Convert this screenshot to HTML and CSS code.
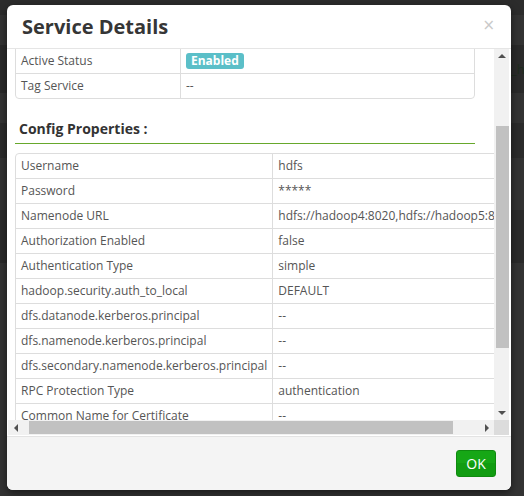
FILE: index.html
```html
<!DOCTYPE html>
<html lang="en">
<head>
<meta charset="utf-8">
<title>Service Details</title>
<link rel="stylesheet" href="styles.css">
</head>
<body>
<div class="page">
  <div class="band b-a"></div>
  <div class="band b-b"></div>
  <div class="band b-c"><span class="ghost">_h</span></div>
  <div class="band b-b"></div>
  <div class="band b-d"></div>
  <div class="band b-e"></div>
  <div class="band b-f"></div>
  <div class="band b-g"></div>
</div>

<div class="modal">
  <div class="modal-header">
    <h3 class="modal-title">Service Details</h3>
    <span class="close">×</span>
  </div>

  <div class="modal-body">
    <div class="viewport">
      <div class="content">
        <h4 class="section-title">Service Details :</h4>
        <table class="tbl tbl-service">
          <tr><td class="k">Service Name</td><td>hadoopdev</td></tr>
          <tr><td class="k">Display Name</td><td>hadoopdev</td></tr>
          <tr><td class="k">Description</td><td>--</td></tr>
          <tr><td class="k">Active Status</td><td><span class="badge">Enabled</span></td></tr>
          <tr><td class="k">Tag Service</td><td>--</td></tr>
        </table>

        <h4 class="section-title">Config Properties :</h4>
        <table class="tbl tbl-config">
          <tr><td class="k">Username</td><td>hdfs</td></tr>
          <tr><td class="k">Password</td><td>*****</td></tr>
          <tr><td class="k">Namenode URL</td><td>hdfs://hadoop4:8020,hdfs://hadoop5:8020</td></tr>
          <tr><td class="k">Authorization Enabled</td><td>false</td></tr>
          <tr><td class="k">Authentication Type</td><td>simple</td></tr>
          <tr><td class="k">hadoop.security.auth_to_local</td><td>DEFAULT</td></tr>
          <tr><td class="k">dfs.datanode.kerberos.principal</td><td>--</td></tr>
          <tr><td class="k">dfs.namenode.kerberos.principal</td><td>--</td></tr>
          <tr><td class="k">dfs.secondary.namenode.kerberos.principal</td><td>--</td></tr>
          <tr><td class="k">RPC Protection Type</td><td>authentication</td></tr>
          <tr><td class="k">Common Name for Certificate</td><td>--</td></tr>
          <tr><td class="k">policy.download.auth.users</td><td>hdfs</td></tr>
        </table>
      </div>
    </div>

    <div class="vscroll">
      <div class="sb-btn"><span class="arrow up"></span></div>
      <div class="sb-track v-track"><div class="thumb v-thumb"></div></div>
      <div class="sb-btn"><span class="arrow down"></span></div>
    </div>
    <div class="hscroll">
      <div class="sb-btn"><span class="arrow left"></span></div>
      <div class="sb-track h-track"><div class="thumb h-thumb"></div></div>
      <div class="sb-btn"><span class="arrow right"></span></div>
    </div>
    <div class="corner"></div>
  </div>

  <div class="modal-footer">
    <button class="btn-ok" type="button">OK</button>
  </div>
</div>
</body>
</html>
```

FILE: styles.css
```css
* { box-sizing: border-box; }

html, body {
  margin: 0;
  padding: 0;
  width: 524px;
  height: 496px;
  overflow: hidden;
  background: #303030;
  font-family: "Open Sans", "Liberation Sans", Arial, sans-serif;
}

/* dimmed page behind the dialog */
.page {
  display: flex;
  flex-direction: column;
  height: 496px;
}
.band { flex: none; display: flex; justify-content: flex-end; }
.b-a { height: 15px; background: #2c2c2c; }
.b-b { height: 30px; background: #333333; }
.b-c { height: 48px; background: #2a2a2a; align-items: center; }
.b-d { height: 35px; background: #2b2b2b; }
.b-e { height: 52px; background: #323232; }
.b-f { height: 53px; background: #2a2a2a; }
.b-g { flex: 1; background: #333333; }
.ghost {
  font-size: 13px;
  color: #1d2a1d;
  width: 13px;
  overflow: hidden;
  white-space: nowrap;
}

/* dialog */
.modal {
  position: absolute;
  left: 7px;
  top: 5px;
  width: 504px;
  height: 485px;
  background: #fff;
  border-radius: 6px;
  overflow: hidden;
  display: flex;
  flex-direction: column;
  box-shadow: 0 3px 9px rgba(0, 0, 0, 0.5);
}

.modal-header {
  flex: none;
  height: 44px;
  border-bottom: 1px solid #e5e5e5;
  display: flex;
  align-items: center;
  justify-content: space-between;
  padding: 0 15px 0 15px;
}
.modal-title {
  margin: 0;
  font-size: 20px;
  font-weight: 700;
  color: #363636;
  line-height: 24px;
}
.close {
  font-size: 15px;
  line-height: 16px;
  color: #c9c9c9;
  font-family: "DejaVu Sans", sans-serif;
  margin: -4px 1px 0 0;
}

/* scroll region */
.modal-body {
  flex: none;
  height: 387px;
  padding: 0 2px 1px 1px;
  display: grid;
  grid-template-columns: 1fr 15px;
  grid-template-rows: 1fr 15px;
}
.viewport {
  overflow: hidden;
  min-width: 0;
  min-height: 0;
}
/* content shown at its current scroll position */
.content {
  margin-top: -110px;
  margin-left: -7px;
  padding: 0 14px;
  width: 488px;
}

.section-title {
  margin: 0 0 9px;
  padding: 0 0 4px 4px;
  font-size: 14px;
  line-height: 20px;
  font-weight: 700;
  color: #333;
  border-bottom: 1px solid #67a82c;
}

.tbl {
  border-collapse: separate;
  border-spacing: 0;
  border: 1px solid #dddddd;
  border-radius: 4px;
  font-size: 12px;
  color: #555;
  white-space: nowrap;
}
.tbl td {
  padding: 4px 5px;
  line-height: 16px;
  height: 25px;
  border-left: 1px solid #dddddd;
  border-top: 1px solid #dddddd;
  vertical-align: middle;
}
.tbl tr:first-child td { border-top: 0; height: 24px; }
.tbl td:first-child { border-left: 0; }

.tbl-service { width: 100%; margin-bottom: 20px; }
.tbl-service td.k { width: 164px; }

.tbl-config { min-width: 100%; }
.tbl-config td.k { width: 257px; }

.badge {
  display: inline-block;
  vertical-align: top;
  height: 16px;
  background: #5bbfc8;
  color: #fff;
  font-weight: 700;
  font-size: 12px;
  line-height: 16px;
  padding: 0 5px;
  border-radius: 3px;
}

/* classic scrollbars */
.vscroll, .hscroll {
  display: flex;
  background: #f1f1f1;
}
.vscroll { flex-direction: column; }
.sb-btn {
  flex: none;
  width: 15px;
  height: 15px;
  display: flex;
  align-items: center;
  justify-content: center;
}
.sb-track { flex: 1; display: flex; }
.v-track { flex-direction: column; }
.thumb { background: #c1c1c1; }
.v-thumb { margin: 62px 0 0 2px; width: 13px; height: 222px; }
.h-thumb { margin: 1px 0 0 6px; width: 424px; height: 13px; }
.corner { background: #dcdcdc; }

.arrow { width: 0; height: 0; border: 4px solid transparent; }
.arrow.up { border-bottom-color: #505050; border-top-width: 0; margin-top: -2px; }
.arrow.down { border-top-color: #505050; border-bottom-width: 0; }
.arrow.left { border-right-color: #505050; border-left-width: 0; }
.arrow.right { border-left-color: #505050; border-right-width: 0; }

/* footer */
.modal-footer {
  flex: 1;
  background: #f4f4f4;
  border-top: 1px solid #e3e3e3;
  display: flex;
  align-items: center;
  justify-content: flex-end;
  padding: 0 15px 0 0;
}
.btn-ok {
  font-family: "Open Sans", "Liberation Sans", Arial, sans-serif;
  font-size: 14px;
  line-height: 19px;
  height: 27px;
  width: 40px;
  padding: 0;
  color: #fff;
  border: 1px solid #0f8a0f;
  border-radius: 3px;
  background: linear-gradient(#16a716 0, #16a716 50%, #119c11 50%, #119c11 100%);
}
```
